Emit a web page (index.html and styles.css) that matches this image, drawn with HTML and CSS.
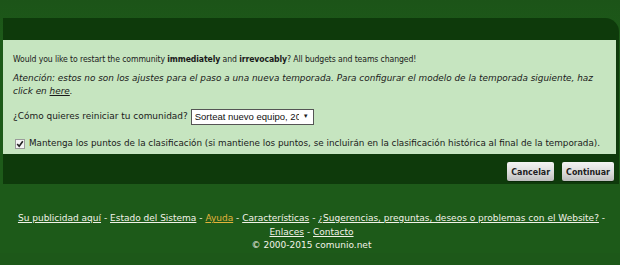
FILE: index.html
```html
<!DOCTYPE html>
<html>
<head>
<meta charset="utf-8">
<link rel="stylesheet" href="styles.css">
</head>
<body>
<div class="page">
  <div class="panel">
    <div class="content">
      <p class="lead">Would you like to restart the community <b>immediately</b> and <b>irrevocably</b>? All budgets and teams changed!</p>
      <p class="note">Atención: estos no son los ajustes para el paso a una nueva temporada. Para configurar el modelo de la temporada siguiente, haz click en <a href="#">here</a>.</p>
      <div class="row">
        <span>¿Cómo quieres reiniciar tu comunidad?</span>
        <span class="select"><span class="select-text">Sorteat nuevo equipo, 20</span><span class="select-arrow">▼</span></span>
      </div>
      <label class="check">
        <span class="box"><svg width="8" height="8" viewBox="0 0 8 8"><path d="M1.2 4 L3.2 6.3 L6.8 1.2" fill="none" stroke="#222" stroke-width="1.6"/></svg></span>
        <span>Mantenga los puntos de la clasificación (si mantiene los puntos, se incluirán en la clasificación histórica al final de la temporada).</span>
      </label>
    </div>
    <div class="actions">
      <span class="btn">Cancelar</span>
      <span class="btn">Continuar</span>
    </div>
  </div>
  <div class="footer">
    <div><a href="#">Su publicidad aquí</a> - <a href="#">Estado del Sistema</a> - <a href="#" class="hl">Ayuda</a> - <a href="#">Características</a> - <a href="#">¿Sugerencias, preguntas, deseos o problemas con el Website?</a> -</div>
    <div><a href="#">Enlaces</a> - <a href="#">Contacto</a></div>
    <div>© 2000-2015 comunio.net</div>
  </div>
</div>
</body>
</html>
```
FILE: styles.css
```css
html, body {
  margin: 0;
  padding: 0;
}
body {
  background: #1d5819;
  font-family: "DejaVu Sans", sans-serif;
  font-size: 8.8px;
  color: #1a1a1a;
  height: 265px;
  overflow: hidden;
}
.page {
  padding: 18px 0 0 3px;
  background: linear-gradient(#1c5418, #1d5a19 40px);
}
.panel {
  background: #0e3a0b;
  border-top-right-radius: 14px;
  padding-top: 22px;
  margin-right: 1px;
}
.content {
  background: #c6e5c0;
  margin-right: 3px;
  padding: 13px 8px 4px 10px;
  line-height: 13px;
}
.content p {
  margin: 0;
}
.content .lead {
  font-family: "DejaVu Sans Condensed", "DejaVu Sans", sans-serif;
  font-size: 8.6px;
  letter-spacing: -0.1px;
  margin-bottom: 6px;
}
.content .note {
  font-style: italic;
  font-size: 8.9px;
  margin-bottom: 10px;
}
.note a {
  color: #1a1a1a;
}
.row {
  display: flex;
  align-items: center;
  gap: 3px;
  height: 17px;
  margin-bottom: 12px;
  font-size: 8.95px;
}
.select {
  display: inline-flex;
  align-items: center;
  justify-content: space-between;
  width: 114px;
  height: 14px;
  border: 1px solid #555;
  background: #fff;
  font-family: "Liberation Sans", sans-serif;
  font-size: 9.5px;
  padding: 0 4px 0 3px;
  white-space: nowrap;
  overflow: hidden;
}
.select-text {
  width: 104px;
  overflow: hidden;
  color: #111;
}
.select-arrow {
  font-size: 6px;
}
.check {
  display: flex;
  align-items: center;
  gap: 4px;
  height: 13px;
  padding-left: 2px;
  white-space: nowrap;
}
.box {
  display: inline-flex;
  width: 8px;
  height: 8px;
  border: 1px solid #9a9a9a;
  background: #f4f4f4;
  align-items: center;
  justify-content: center;
}
.actions {
  display: flex;
  justify-content: flex-end;
  gap: 8px;
  padding: 8px 5px 3px 0;
}
.btn {
  display: inline-flex;
  align-items: center;
  justify-content: center;
  height: 19px;
  padding: 0 4px;
  border-radius: 2px;
  background: linear-gradient(#f4f4f4, #d8d8d8 60%, #bdbdbd);
  font-family: "DejaVu Sans Condensed", "DejaVu Sans", sans-serif;
  font-weight: bold;
  color: #202020;
  font-size: 8.8px;
  box-shadow: 0 1px 0 #0a2a08;
}
.footer {
  padding-top: 28px;
  text-align: center;
  color: #f2f2e8;
  font-size: 9px;
  line-height: 13.6px;
}
.footer a {
  color: #f2f2e8;
}
.footer a.hl {
  color: #e2b33c;
}
```
